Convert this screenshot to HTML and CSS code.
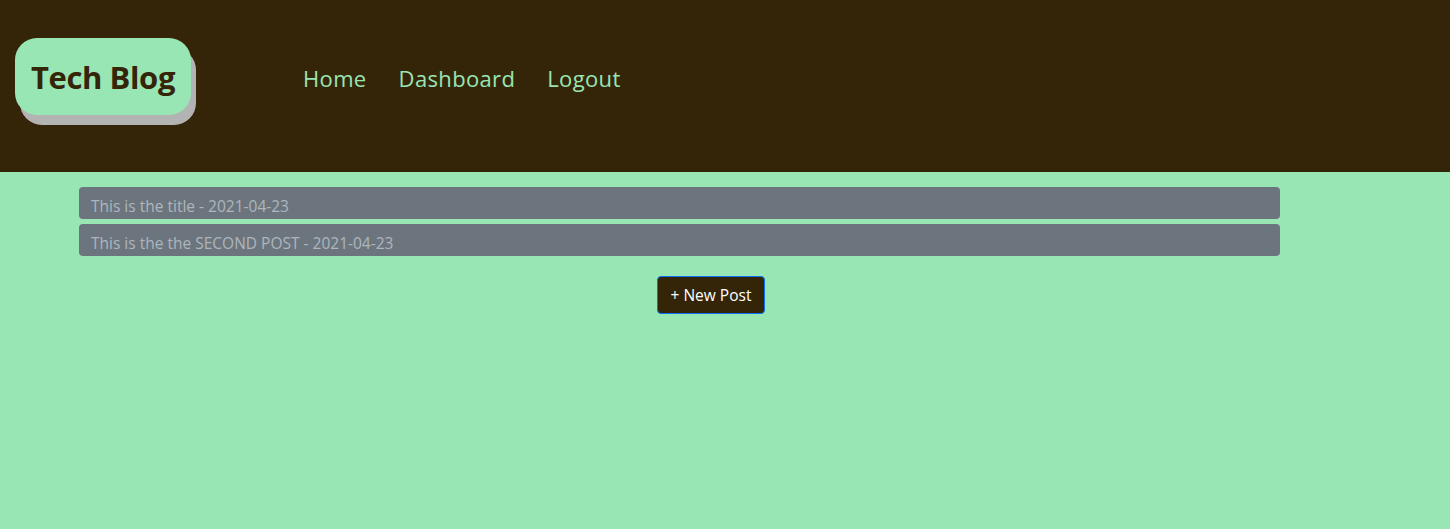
FILE: index.html
```html
<!DOCTYPE html>
<html>
<head>
<meta charset="utf-8">
<link rel="stylesheet" href="styles.css">
</head>
<body>
<header class="site-header">
  <div class="logo"><h1>Tech Blog</h1></div>
  <nav class="nav">
    <a href="#">Home</a>
    <a href="#">Dashboard</a>
    <a href="#">Logout</a>
  </nav>
</header>
<main class="main">
  <div class="posts">
    <div class="post">This is the title - 2021-04-23</div>
    <div class="post">This is the the SECOND POST - 2021-04-23</div>
  </div>
  <div class="actions">
    <button class="btn-new">+ New Post</button>
  </div>
</main>
</body>
</html>
```
FILE: styles.css
```css
* { box-sizing: border-box; }
html, body { margin: 0; padding: 0; }
body {
  background: #98e6b3;
  font-family: "Open Sans", "Noto Sans", sans-serif;
  min-height: 529px;
}
.site-header {
  background: #352508;
  height: 172px;
  display: flex;
  align-items: flex-start;
  padding: 38px 0 0 15px;
}
.logo {
  background: #98e6b3;
  border-radius: 22px;
  box-shadow: 5px 10px 0 #b3b3b3;
  width: 176px;
  height: 77px;
  display: flex;
  align-items: center;
  justify-content: center;
}
.logo h1 {
  margin: 0;
  font-size: 31px;
  font-weight: 700;
  color: #352508;
  letter-spacing: -0.4px;
}
.nav {
  display: flex;
  gap: 32px;
  margin-left: 112px;
  height: 79px;
  align-items: center;
}
.nav a {
  color: #98e6b3;
  text-decoration: none;
  font-size: 22px;
  letter-spacing: 0.35px;
}
.main { padding-top: 15px; }
.posts {
  margin-left: 79px;
  width: 1201px;
  display: flex;
  flex-direction: column;
  gap: 5px;
}
.post {
  background: #6c757d;
  color: #adb5bd;
  border-radius: 4px;
  height: 32px;
  padding: 7px 12px 0;
  font-size: 15.5px;
  line-height: 24px;
}
.actions {
  display: flex;
  margin-top: 20px;
  padding-left: 657px;
}
.btn-new {
  background: #352508;
  color: #fff;
  border: 1px solid #0d6efd;
  border-radius: 4px;
  width: 108px;
  height: 38px;
  font-family: inherit;
  font-size: 15.5px;
  padding: 0;
}
```
